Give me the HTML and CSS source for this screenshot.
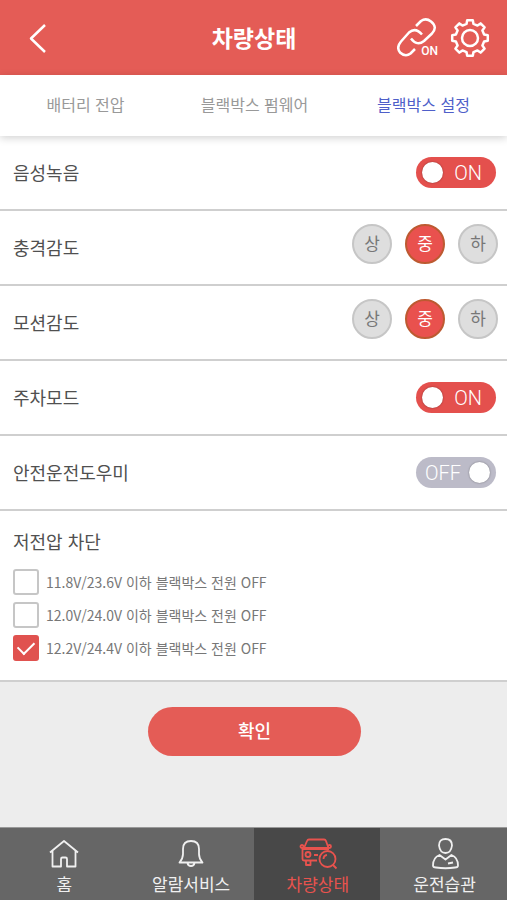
FILE: index.html
```html
<!DOCTYPE html>
<html lang="ko">
<head>
<meta charset="utf-8">
<meta name="viewport" content="width=device-width, initial-scale=1">
<title>차량상태</title>
<link rel="stylesheet" href="styles.css">
</head>
<body>
<div class="app">
  <header class="header">
    <div class="header-side">
      <button class="icon-btn" type="button" aria-label="뒤로">
        <svg width="20" height="32" viewBox="0 0 20 32"><path d="M18 3 4 16.500 18 30"/></svg>
      </button>
    </div>
    <h1 class="title">차량상태</h1>
    <div class="header-side header-actions">
      <button class="icon-btn link-btn" type="button">
        <svg width="40" height="40" viewBox="0 0 40 40" aria-hidden="true">
          <path d="M19 8 24 3Q29-.5 34 3.500 41 9 35 15.500L27 23Q20 28.500 14 20.500"/>
          <path d="M25 16.500Q18.500 9 12 14.500L4 23.500Q-1 29.500 3 34.500 8.500 39.500 13.500 35.500L18 31"/>
        </svg>
        <span class="link-state">ON</span>
      </button>
      <button class="icon-btn" type="button" aria-label="설정">
        <svg width="40" height="40" viewBox="0 0 40 40">
          <path d="M17.200 2.200H22.800L23.500 5.900 27.500 7.600 30.600 5.400 34.600 9.400 32.400 12.500 34.100 16.500 37.800 17.200V22.800L34.100 23.500 32.400 27.500 34.600 30.600 30.600 34.600 27.500 32.400 23.500 34.100 22.800 37.800H17.200L16.500 34.100 12.500 32.400 9.400 34.600 5.400 30.600 7.600 27.500 5.900 23.500 2.200 22.800V17.200L5.900 16.500 7.600 12.500 5.400 9.400 9.400 5.400 12.500 7.600 16.500 5.900Z"/>
          <circle cx="20" cy="20" r="8"/>
        </svg>
      </button>
    </div>
  </header>

  <nav class="tabs" aria-label="차량상태 메뉴">
    <a class="tab" href="#battery">배터리 전압</a>
    <a class="tab" href="#firmware">블랙박스 펌웨어</a>
    <a class="tab tab-active" href="#settings" aria-current="page">블랙박스 설정</a>
  </nav>

  <main class="main">
    <form class="settings">
      <div class="row">
        <label class="row-label" for="voice">음성녹음</label>
        <span class="toggle"><input id="voice" type="checkbox" role="switch" checked><span class="toggle-text">ON</span></span>
      </div>
      <div class="row row-levels" role="radiogroup" aria-labelledby="shock">
        <span class="row-label" id="shock">충격감도</span>
        <span class="levels">
          <label class="level"><input type="radio" name="shock"><span>상</span></label>
          <label class="level"><input type="radio" name="shock" checked><span>중</span></label>
          <label class="level"><input type="radio" name="shock"><span>하</span></label>
        </span>
      </div>
      <div class="row row-levels" role="radiogroup" aria-labelledby="motion">
        <span class="row-label" id="motion">모션감도</span>
        <span class="levels">
          <label class="level"><input type="radio" name="motion"><span>상</span></label>
          <label class="level"><input type="radio" name="motion" checked><span>중</span></label>
          <label class="level"><input type="radio" name="motion"><span>하</span></label>
        </span>
      </div>
      <div class="row">
        <label class="row-label" for="parking">주차모드</label>
        <span class="toggle"><input id="parking" type="checkbox" role="switch" checked><span class="toggle-text">ON</span></span>
      </div>
      <div class="row">
        <label class="row-label" for="assist">안전운전도우미</label>
        <span class="toggle"><input id="assist" type="checkbox" role="switch"><span class="toggle-text">OFF</span></span>
      </div>
      <div class="cutoff" role="group" aria-labelledby="cutoff">
        <span class="row-label" id="cutoff">저전압 차단</span>
        <div class="options">
          <label class="option"><input type="checkbox">11.8V/23.6V 이하 블랙박스 전원 OFF</label>
          <label class="option"><input type="checkbox">12.0V/24.0V 이하 블랙박스 전원 OFF</label>
          <label class="option"><input type="checkbox" checked>12.2V/24.4V 이하 블랙박스 전원 OFF</label>
        </div>
      </div>
      <div class="submit">
        <button class="confirm" type="button">확인</button>
      </div>
    </form>
  </main>

  <nav class="bottom" aria-label="주 메뉴">
    <a class="item" href="#home">
      <svg width="40" height="32" viewBox="0 0 40 32"><path d="M6 14.500 20 3 34 14.500M8.500 13V28.500H17V21Q17 19.500 18.500 19.500H21.500Q23 19.500 23 21V28.500H31.500V13"/></svg>
      <span>홈</span>
    </a>
    <a class="item" href="#alarm">
      <svg width="40" height="32" viewBox="0 0 40 32"><path d="M8.500 24.500Q12 20.500 12 16V11Q12 3 20 3T28 11V16Q28 20.500 31.500 24.500ZM16.500 25Q17 28 20 28T23.500 25"/></svg>
      <span>알람서비스</span>
    </a>
    <a class="item item-active" href="#status" aria-current="page">
      <svg width="40" height="32" viewBox="0 0 40 32">
        <path d="M6 10 9 3Q9.500 1.500 11 1.500H26Q27.500 1.500 28 3L30.500 10ZM4 11H31M4.500 11V21Q4.500 22.500 6 22.500H19M16 17H20M8 23V27H12.500V23"/>
        <circle cx="4" cy="8.500" r="1.500"/><circle cx="31.500" cy="8.500" r="1.500"/><circle cx="10" cy="16.500" r="2.500"/>
        <circle cx="29.500" cy="21" r="8"/><path d="M35 27 38.500 30.500M25.500 21Q25.500 17.500 29 17"/>
      </svg>
      <span>차량상태</span>
    </a>
    <a class="item" href="#driving">
      <svg width="40" height="32" viewBox="0 0 40 32"><path d="M20.500 1Q27 1 27 7.500 26 15 20.500 15T14 7.500Q14 1 20.500 1ZM14.500 17Q8 19.500 8 27.500 8 29.500 11 29.500 20.500 31 30 29.500 33 29.500 33 27.500 33 19.500 26.500 17L20.500 21.500ZM23 25.500 28 24.500"/></svg>
      <span>운전습관</span>
    </a>
  </nav>
</div>
</body>
</html>
```
FILE: styles.css
```css
:root {
  --red: #e45c56;
  --line: #cfcfcf;
}

* { box-sizing: border-box; }

body {
  margin: 0;
  font-family: "Noto Sans CJK KR", sans-serif;
  color: #505050;
}

button, input { font: inherit; margin: 0; }
a { text-decoration: none; color: inherit; }

svg {
  display: block;
  fill: none;
  stroke: currentColor;
  stroke-width: 2;
  stroke-linejoin: round;
}

.app {
  min-height: 100vh;
  display: flex;
  flex-direction: column;
  background: #ededed;
}

.header {
  display: grid;
  grid-template-columns: 1fr auto 1fr;
  align-items: center;
  min-height: 75px;
  padding: 0 17px 0 27px;
  background: var(--red);
  color: #fff;
}

.header-side { display: flex; }
.header-actions { justify-content: flex-end; gap: 13px; }

.title {
  margin: 0;
  padding: 0 9px 2px 0;
  font-size: 23px;
  line-height: 32px;
  font-weight: 700;
}

.icon-btn {
  position: relative;
  padding: 0;
  border: 0;
  background: none;
  color: #fff;
}
.icon-btn svg { stroke-width: 2.5; }

.link-state {
  position: absolute;
  right: -1px;
  bottom: 0;
  font: 500 12px/14px Roboto, sans-serif;
}

.tabs {
  position: relative;
  display: grid;
  grid-template-columns: repeat(3, 1fr);
  background: #fff;
  box-shadow: 0 2px 8px rgba(0, 0, 0, .18);
}

.tab {
  padding: 17px 0 20px 2px;
  text-align: center;
  font-size: 16px;
  line-height: 24px;
  color: #999;
}
.tab-active { color: #4f5fc9; }

.main { flex: 1; }

.row {
  display: flex;
  align-items: center;
  justify-content: space-between;
  min-height: 75px;
  padding: 0 11px 0 13px;
  background: #fff;
  border-bottom: 2px solid var(--line);
}
.row-levels { padding-right: 9px; }

.row-label {
  display: block;
  padding-bottom: 2px;
  font-size: 18px;
  line-height: 26px;
}

.toggle {
  position: relative;
  display: flex;
}
.toggle input {
  appearance: none;
  display: flex;
  align-items: center;
  justify-content: flex-end;
  width: 80px;
  height: 31px;
  padding: 0 6px;
  border-radius: 16px;
  background: #bcbbc8;
}
.toggle input::before {
  content: "";
  width: 21px;
  height: 21px;
  border-radius: 50%;
  background: #fff;
  box-shadow: 0 0 2px rgba(0, 0, 0, .4);
}
.toggle input:checked {
  justify-content: flex-start;
  background: #e4504d;
}
.toggle-text {
  position: absolute;
  inset: 0 auto 0 9px;
  font: 300 20px/32px Roboto, sans-serif;
  color: #fff;
  pointer-events: none;
}
.toggle input:checked + .toggle-text { inset: 0 14px 0 auto; }

.levels {
  display: flex;
  gap: 13px;
  margin-bottom: 8px;
}
.level { position: relative; }
.level input {
  position: absolute;
  inset: 0;
  opacity: 0;
}
.level span {
  display: block;
  width: 40px;
  height: 40px;
  border: 2px solid #c6c6c6;
  border-radius: 50%;
  background: #dedede;
  text-align: center;
  font-size: 17px;
  line-height: 33px;
  color: #777;
}
.level input:checked + span {
  border-color: #bd5a31;
  background: #e9514e;
  color: #fff;
}

.cutoff {
  padding: 17px 13px 19px;
  background: #fff;
  border-bottom: 2px solid var(--line);
}
.options {
  display: grid;
  gap: 7px;
  margin-top: 13px;
}
.option {
  display: flex;
  align-items: center;
  gap: 7px;
  font-size: 14px;
  line-height: 26px;
  color: #777;
}
.option input {
  appearance: none;
  display: grid;
  place-items: center;
  width: 26px;
  height: 26px;
  border: 2px solid #c6c6c6;
  border-radius: 3px;
  background: #fff;
}
.option input:checked {
  border-color: #e0524f;
  background: #e0524f;
}
.option input:checked::before {
  content: "";
  width: 14px;
  height: 8px;
  margin-bottom: 5px;
  border: solid #fff;
  border-width: 0 0 2px 2px;
  transform: rotate(-45deg);
}

.submit {
  display: flex;
  justify-content: center;
  padding: 25px 0 25px 2px;
}
.confirm {
  width: 42%;
  min-height: 49px;
  padding: 0 0 3px;
  border: 0;
  border-radius: 25px;
  background: var(--red);
  color: #fff;
  font-size: 18px;
  font-weight: 500;
}

.bottom {
  display: grid;
  grid-template-columns: repeat(4, 1fr);
  background: #666;
  border-top: 1px solid #999;
  color: #f0f0f0;
}
.item {
  display: flex;
  flex-direction: column;
  align-items: center;
  padding: 10px 0 2px 2px;
  font-size: 17px;
  line-height: 28px;
}
.item svg { stroke-width: 1.8; }
.item-active {
  background: #484848;
  color: #e8534e;
}
```
